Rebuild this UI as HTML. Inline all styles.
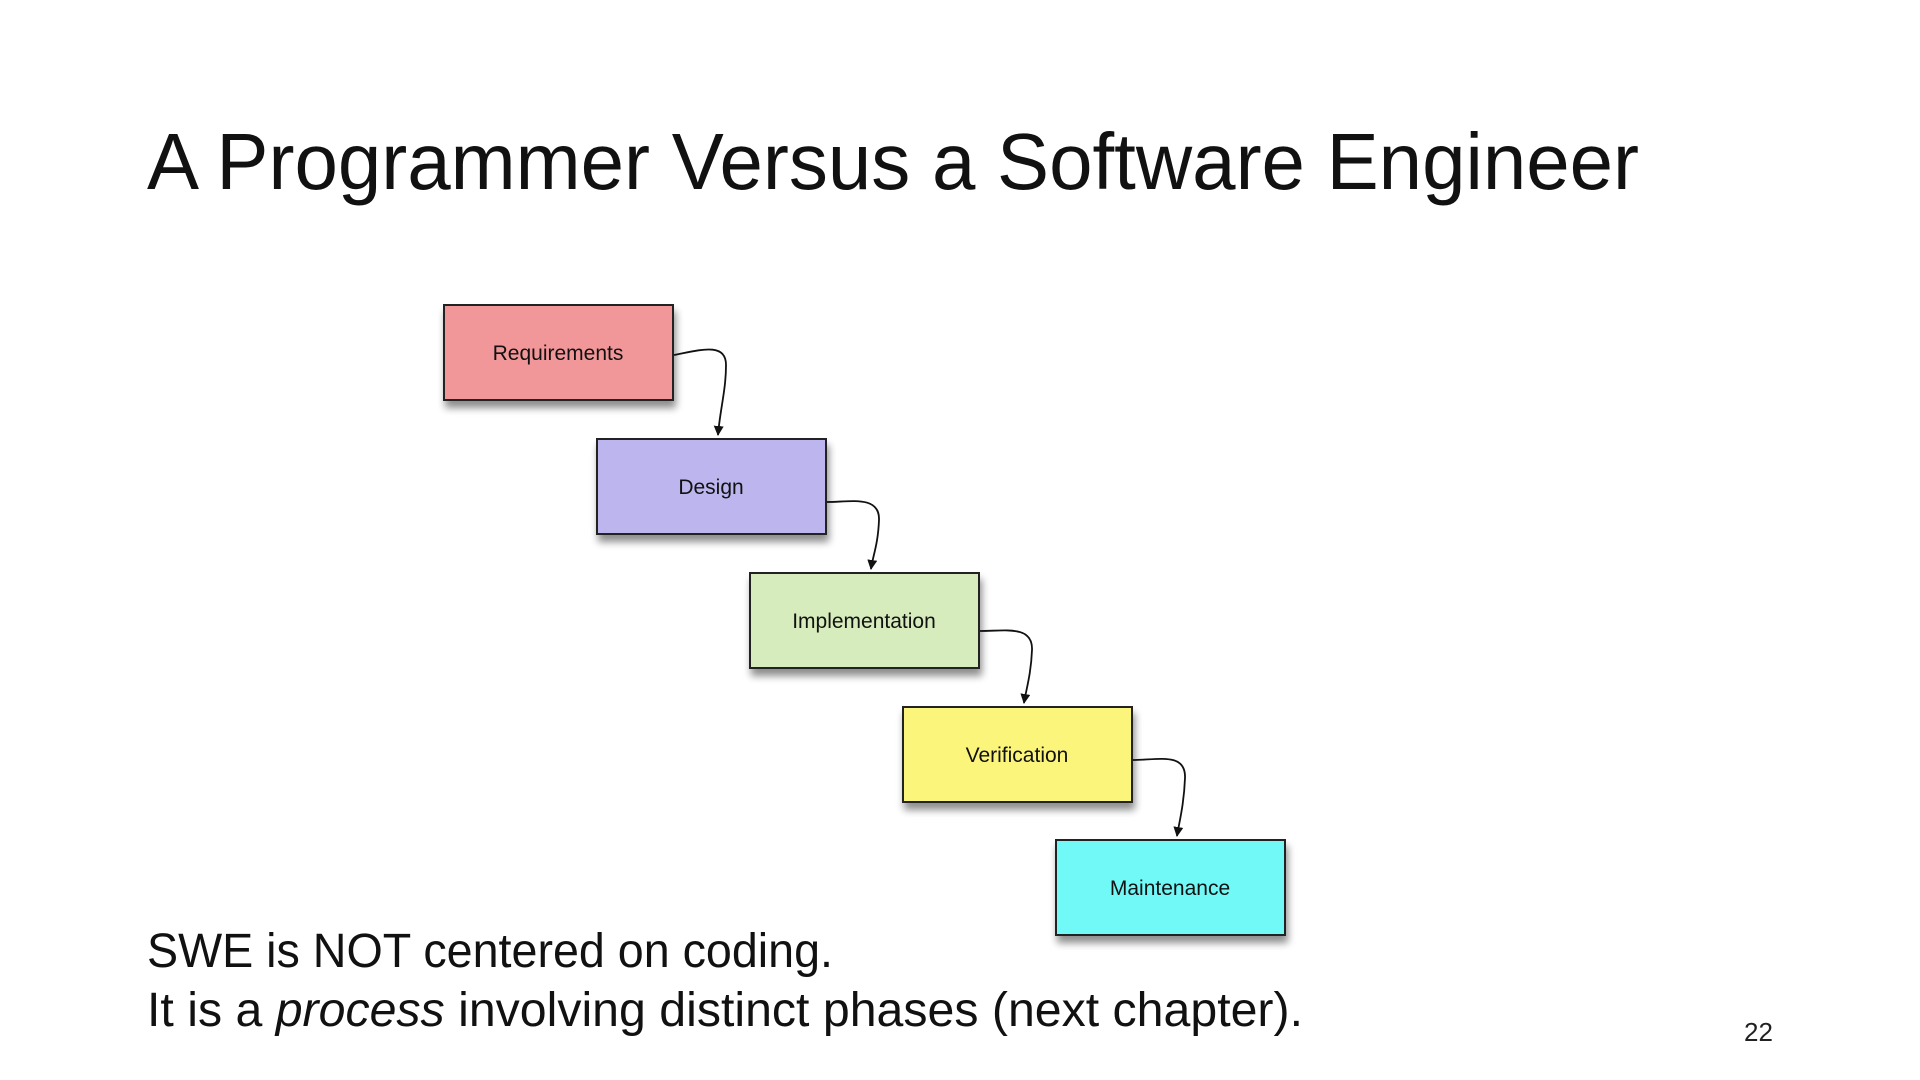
<!DOCTYPE html>
<html><head><meta charset="utf-8"><style>html,body{margin:0;padding:0;background:#fff;}svg{display:block}</style></head>
<body>
<svg width="1920" height="1080" viewBox="0 0 1920 1080" xmlns="http://www.w3.org/2000/svg">
<defs>
<marker id="ah" viewBox="0 0 10 10" refX="9" refY="5" markerWidth="10" markerHeight="10" orient="auto" markerUnits="userSpaceOnUse"><path d="M0,0 L10,5 L0,10 z" fill="#111"/></marker>
<filter id="sh" x="-10%" y="-10%" width="130%" height="140%"><feGaussianBlur in="SourceAlpha" stdDeviation="4"/><feOffset dx="2" dy="7"/><feComponentTransfer><feFuncA type="linear" slope="0.45"/></feComponentTransfer><feMerge><feMergeNode/><feMergeNode in="SourceGraphic"/></feMerge></filter>
</defs>
<text x="147" y="189" font-family="Liberation Sans, sans-serif" font-size="80" fill="#111" textLength="1492" lengthAdjust="spacingAndGlyphs">A Programmer Versus a Software Engineer</text>
<g stroke="#222" stroke-width="2">
<rect x="444" y="305" width="229" height="95" fill="#f29799" filter="url(#sh)"/>
<rect x="597" y="439" width="229" height="95" fill="#bdb6ee" filter="url(#sh)"/>
<rect x="750" y="573" width="229" height="95" fill="#d7ecbc" filter="url(#sh)"/>
<rect x="903" y="707" width="229" height="95" fill="#fcf57c" filter="url(#sh)"/>
<rect x="1056" y="840" width="229" height="95" fill="#71f9f8" filter="url(#sh)"/>
</g>
<g fill="none" stroke="#111" stroke-width="1.8" marker-end="url(#ah)">
<path d="M674,355 C700,350 726,342 726,365 C726,390 720,410 718,435"/>
<path d="M827,502 C850,502 880,495 879,520 C878,545 873,555 871,569"/>
<path d="M980,631 C1005,631 1033,625 1032,650 C1031,675 1026,690 1024,703"/>
<path d="M1133,760 C1158,760 1186,752 1185,778 C1184,805 1179,823 1177,836"/>
</g>
<g font-family="Liberation Sans, sans-serif" font-size="21" fill="#111" text-anchor="middle">
<text x="558" y="360">Requirements</text>
<text x="711" y="494">Design</text>
<text x="864" y="628">Implementation</text>
<text x="1017" y="762">Verification</text>
<text x="1170" y="895">Maintenance</text>
</g>
<text x="147" y="967" font-family="Liberation Sans, sans-serif" font-size="48" fill="#111" textLength="686" lengthAdjust="spacingAndGlyphs">SWE is NOT centered on coding.</text>
<text x="147" y="1026" font-family="Liberation Sans, sans-serif" font-size="48" fill="#111" textLength="1156" lengthAdjust="spacingAndGlyphs">It is a <tspan font-style="italic">process</tspan> involving distinct phases (next chapter).</text>
<text x="1744" y="1041" font-family="Liberation Sans, sans-serif" font-size="26" fill="#222">22</text>
</svg>
</body></html>
